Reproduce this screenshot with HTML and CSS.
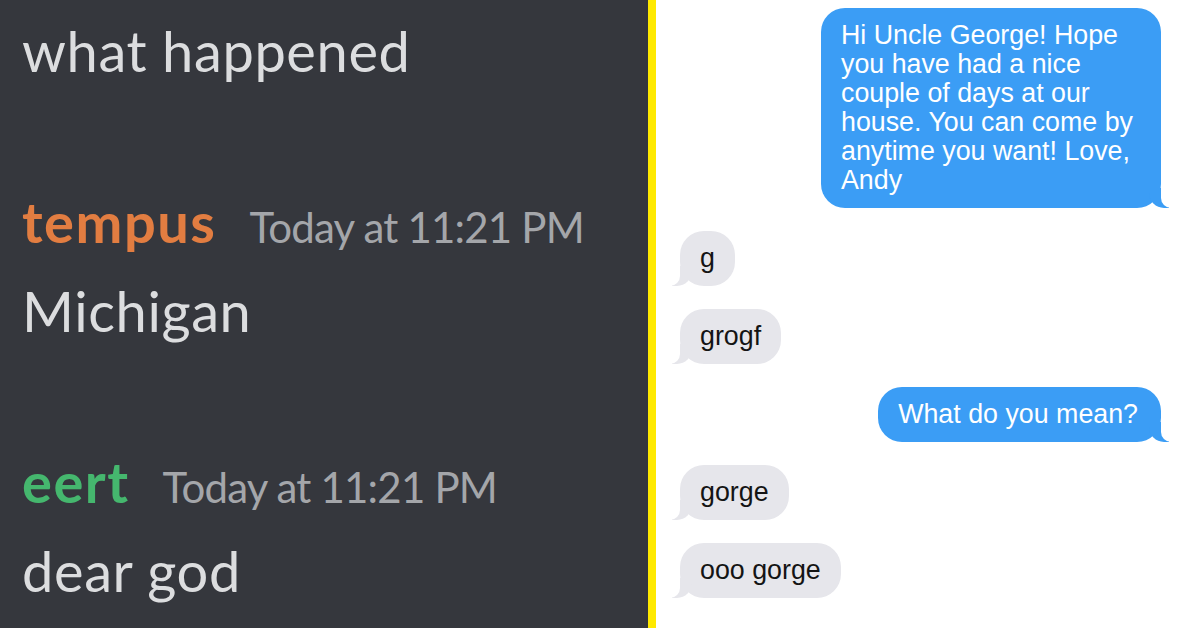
FILE: index.html
```html
<!DOCTYPE html>
<html>
<head>
<meta charset="utf-8">
<link rel="stylesheet" href="styles.css">
</head>
<body>
<div class="page">
  <section class="discord">
    <p class="line">what happened</p>
    <div class="msg">
      <div class="head"><span class="name orange">tempus</span><span class="time">Today at 11:21 PM</span></div>
      <p class="line">Michigan</p>
    </div>
    <div class="msg">
      <div class="head"><span class="name green">eert</span><span class="time">Today at 11:21 PM</span></div>
      <p class="line">dear god</p>
    </div>
  </section>
  <div class="divider"></div>
  <section class="imsg">
    <div class="bubble me wide">Hi Uncle George! Hope<br>you have had a nice<br>couple of days at our<br>house. You can come by<br>anytime you want! Love,<br>Andy</div>
    <div class="bubble them">g</div>
    <div class="bubble them">grogf</div>
    <div class="bubble me">What do you mean?</div>
    <div class="bubble them">gorge</div>
    <div class="bubble them">ooo gorge</div>
  </section>
</div>
</body>
</html>
```
FILE: styles.css
```css
html, body {
  margin: 0;
  padding: 0;
  width: 1200px;
  height: 628px;
  overflow: hidden;
}
.page {
  display: flex;
  width: 1200px;
  height: 628px;
}
.discord {
  width: 648px;
  flex: none;
  background: #35373d;
  padding: 21px 0 0 22px;
  box-sizing: border-box;
  font-family: Lato, "Open Sans", sans-serif;
}
.line {
  margin: 0;
  font-size: 56px;
  line-height: 60px;
  letter-spacing: 0.6px;
  color: #dcdddf;
  white-space: nowrap;
}
.msg {
  margin-top: 111px;
}
.msg .line {
  margin-top: 24px;
}
.head {
  display: flex;
  align-items: baseline;
  gap: 33px;
  line-height: 60px;
  white-space: nowrap;
}
.name {
  font-size: 56px;
  font-weight: 700;
  letter-spacing: 1.5px;
}
.orange { color: #e27d41; }
.green { color: #45b76e; }
.time {
  font-size: 42px;
  color: #a4a6aa;
  letter-spacing: -0.8px;
}
.divider {
  width: 8px;
  flex: none;
  background: #ffe900;
}
.imsg {
  flex: 1;
  background: #ffffff;
  display: flex;
  flex-direction: column;
  align-items: flex-start;
  gap: 23px;
  padding: 8px 39px 0 24px;
  font-family: "Liberation Sans", Arial, sans-serif;
}
.bubble {
  position: relative;
  font-size: 26.8px;
  line-height: 29px;
  padding: 13px 20px;
  border-radius: 24px;
  white-space: nowrap;
}
.bubble.me {
  align-self: flex-end;
  background: #3b9df5;
  color: #ffffff;
  padding-right: 23px;
}
.bubble.me.wide {
  padding-right: 28px;
}
.bubble.them {
  background: #e6e6eb;
  color: #141414;
}
.bubble::before,
.bubble::after {
  content: "";
  position: absolute;
  bottom: 0;
  height: 20px;
}
.bubble.me::before {
  right: -8px;
  width: 20px;
  background: #3b9df5;
  border-bottom-left-radius: 15px;
}
.bubble.me::after {
  right: -10px;
  width: 10px;
  background: #ffffff;
  border-bottom-left-radius: 10px;
}
.bubble.them::before {
  left: -8px;
  width: 20px;
  background: #e6e6eb;
  border-bottom-right-radius: 15px;
}
.bubble.them::after {
  left: -10px;
  width: 10px;
  background: #ffffff;
  border-bottom-right-radius: 10px;
}
```
